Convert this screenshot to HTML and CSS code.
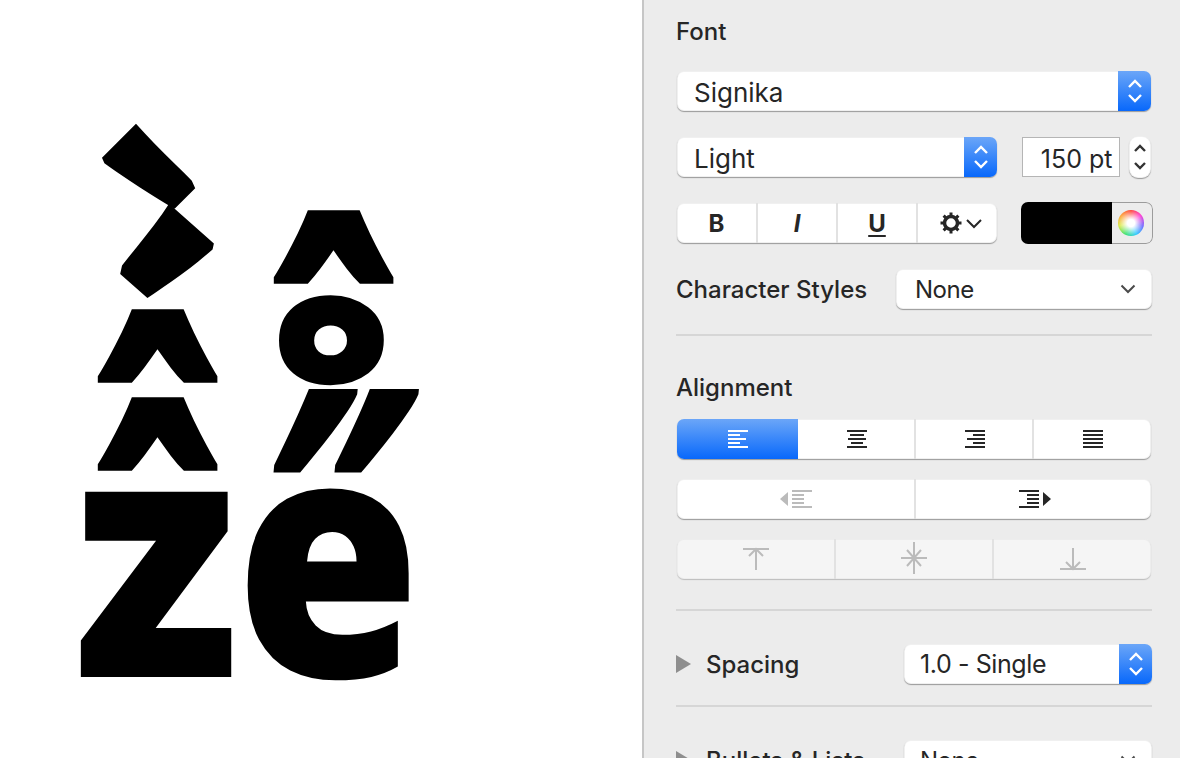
FILE: index.html
```html
<!DOCTYPE html>
<html lang="en">

<head>
  <meta charset="UTF-8">
  <meta name="viewport" content="width=device-width, initial-scale=1.0">
  <title>Format Inspector</title>
  <link rel="stylesheet" href="styles.css">
</head>

<body>
  <!-- Document canvas with the stacked accents -->
  <main class="canvas">
    <span class="glyph gl-grave">`</span>
    <span class="glyph gl-acute">´</span>
    <span class="glyph gl-circ-a">ˆ</span>
    <span class="glyph gl-circ-b">ˆ</span>
    <span class="glyph gl-z">z</span>
    <span class="glyph gl-circ-c">ˆ</span>
    <span class="glyph gl-ring">˚</span>
    <span class="glyph gl-dbl">˝</span>
    <span class="glyph gl-e">e</span>
  </main>

  <aside class="panel">
    <h2 class="section-title">Font</h2>
    <div class="row">
      <div class="popup popup-wide"><span class="popup-text">Signika</span>
        <span class="popup-arrows"><svg width="16" height="28" viewBox="0 0 16 28"><path d="M2 10l6-6 6 6M2 18l6 6 6-6" /></svg></span>
      </div>
    </div>
    <div class="row row-split">
      <div class="popup popup-style"><span class="popup-text">Light</span>
        <span class="popup-arrows"><svg width="16" height="28" viewBox="0 0 16 28"><path d="M2 10l6-6 6 6M2 18l6 6 6-6" /></svg></span>
      </div>
      <div class="size-field">150 pt</div>
      <div class="stepper"><svg width="12" height="30" viewBox="0 0 12 30"><path d="M1 9l5-5 5 5M1 21l5 5 5-5" /></svg></div>
    </div>
    <div class="row row-split">
      <div class="seg seg-style">
        <button class="seg-btn style-b">B</button>
        <button class="seg-btn style-i">I</button>
        <button class="seg-btn style-u">U</button>
        <button class="seg-btn style-more">
          <svg width="42" height="24" viewBox="0 0 42 24">
            <circle class="gear-ring" cx="11" cy="12" r="6.5" />
            <path class="gear-teeth" d="M11 1.500v4M11 18.500v4M.5 12h4M17.500 12h4M3.600 4.600l2.800 2.800M15.600 16.600l2.800 2.800M18.400 4.600l-2.800 2.800M6.400 16.600l-2.800 2.800" />
            <path class="gear-chev" d="M27 9l7 7 7-7" />
          </svg>
        </button>
      </div>
      <div class="color-well">
        <div class="color-black"></div>
        <div class="color-pick"><div class="color-wheel"></div></div>
      </div>
    </div>
    <div class="row row-label">
      <span class="section-title">Character Styles</span>
      <div class="popup popup-char"><span class="popup-text">None</span>
        <svg class="chev" width="16" height="10" viewBox="0 0 16 10"><path d="M1.500 1.500L8 8l6.500-6.500" /></svg>
      </div>
    </div>
    <hr class="divider divider-a">

    <h2 class="section-title title-align">Alignment</h2>
    <div class="seg seg-align">
      <button class="seg-btn seg-on">
        <svg class="bars" width="20" height="18" viewBox="0 0 20 18"><path d="M0 0h20v2H0zM0 4h12v2H0zM0 8h18v2H0zM0 12h12v2H0zM0 16h20v2H0z" /></svg>
      </button>
      <button class="seg-btn">
        <svg class="bars" width="20" height="18" viewBox="0 0 20 18"><path d="M0 0h20v2H0zM3 4h14v2H3zM1 8h18v2H1zM4 12h12v2H4zM0 16h20v2H0z" /></svg>
      </button>
      <button class="seg-btn">
        <svg class="bars" width="20" height="18" viewBox="0 0 20 18"><path d="M0 0h20v2H0zM8 4h12v2H8zM2 8h18v2H2zM8 12h12v2H8zM0 16h20v2H0z" /></svg>
      </button>
      <button class="seg-btn">
        <svg class="bars" width="20" height="18" viewBox="0 0 20 18"><path d="M0 0h20v2H0zM0 4h20v2H0zM0 8h20v2H0zM0 12h20v2H0zM0 16h20v2H0z" /></svg>
      </button>
    </div>
    <div class="seg seg-indent">
      <button class="seg-btn">
        <svg class="bars bars-off" width="32" height="18" viewBox="0 0 32 18"><path d="M8 2v14L0 9zM12 0h20v2H12zM12 4h12v2H12zM12 8h12v2H12zM12 12h12v2H12zM12 16h20v2H12z" /></svg>
      </button>
      <button class="seg-btn indent-on">
        <svg class="bars" width="32" height="18" viewBox="0 0 32 18"><path d="M24 2v14l8-7zM0 0h20v2H0zM8 4h12v2H8zM8 8h12v2H8zM8 12h12v2H8zM0 16h20v2H0z" /></svg>
      </button>
    </div>
    <div class="seg seg-vert">
      <button class="seg-btn">
        <svg class="lines" width="26" height="24" viewBox="0 0 26 24"><path d="M0 2h26M13 2v21M6 9l7-7 7 7" /></svg>
      </button>
      <button class="seg-btn">
        <svg class="lines" width="26" height="34" viewBox="0 0 26 34"><path d="M0 16h26M13 0v32M6 8l7 8 7-8M6 24l7-8 7 8" /></svg>
      </button>
      <button class="seg-btn">
        <svg class="lines" width="26" height="24" viewBox="0 0 26 24"><path d="M0 22h26M13 1v21M6 15l7 7 7-7" /></svg>
      </button>
    </div>
    <hr class="divider divider-b">

    <div class="row-label row-disc">
      <span class="disc"></span>
      <span class="section-title disc-title">Spacing</span>
      <div class="popup popup-disc"><span class="popup-text">1.0 - Single</span>
        <span class="popup-arrows"><svg width="16" height="28" viewBox="0 0 16 28"><path d="M2 10l6-6 6 6M2 18l6 6 6-6" /></svg></span>
      </div>
    </div>
    <hr class="divider divider-c">
    <div class="row-label row-disc">
      <span class="disc"></span>
      <span class="section-title disc-title">Bullets &amp; Lists</span>
      <div class="popup popup-disc popup-none"><span class="popup-text">None</span>
        <svg class="chev" width="16" height="10" viewBox="0 0 16 10"><path d="M1.500 1.500L8 8l6.500-6.500" /></svg>
      </div>
    </div>
  </aside>
</body>

</html>
```

FILE: styles.css
```css
html,
body {
  height: 100%;
}

body {
  margin: 0;
  height: 758px;
  overflow: hidden;
  display: flex;
  background-color: #ffffff;
  font-family: Inter, "Liberation Sans", sans-serif;
  color: #262626;
}

/* Canvas */
.canvas {
  position: relative;
  width: 642px;
  flex: none;
  overflow: hidden;
  background-color: #ffffff;
}

.glyph {
  position: absolute;
  font-family: "Noto Sans", sans-serif;
  font-weight: 900;
  font-size: 270px;
  line-height: 1;
  color: #000000;
  white-space: pre;
  transform-origin: 0 0;
}

.gl-z {
  left: 73px;
  top: 380px;
  font-size: 335px;
  transform: scaleX(0.98);
}

.gl-e {
  left: 235px;
  top: 380px;
  font-size: 335px;
  transform: scaleX(0.9);
}

.gl-grave {
  left: 66px;
  top: 99px;
  transform: matrix(0.6, -0.6, 0.89, 1.97, 0, 0);
}

.gl-acute {
  left: 149px;
  top: 99px;
  transform: matrix(0.795, 0.705, -0.49, 2.19, 0, 0);
}

.gl-circ-a {
  left: 87px;
  top: 253px;
  transform: scaleY(1.7);
}

.gl-circ-b {
  left: 87px;
  top: 341px;
  transform: scaleY(1.7);
}

.gl-circ-c {
  left: 263px;
  top: 154px;
  transform: scaleY(1.7);
}

.gl-ring {
  left: 263px;
  top: 282px;
  font-size: 400px;
  transform: scaleY(0.91);
}

.gl-dbl {
  left: 277px;
  top: 326px;
  font-size: 310px;
  transform: matrix(0.87, 0, -0.164, 1.68, 0, 0);
}

/* Inspector panel */
.panel {
  flex: 1;
  box-sizing: border-box;
  border-left: 2px solid #c6c6c6;
  background-color: #ececec;
  padding: 17px 29px 0 33px;
}

.section-title {
  margin: 0 0 0 -1px;
  font-size: 24px;
  font-weight: 500;
  line-height: 30px;
  color: #262626;
}

.row {
  display: flex;
  margin-top: 26px;
}

.row:first-of-type {
  margin-top: 24px;
}

.row-split {
  justify-content: space-between;
  align-items: center;
  height: 40px;
}

.row-label {
  display: flex;
  align-items: center;
  justify-content: space-between;
  margin-top: 26px;
}

.row-label .section-title {
  position: relative;
  top: 1px;
}

/* Popups */
.popup {
  position: relative;
  box-sizing: border-box;
  height: 40px;
  display: flex;
  align-items: center;
  background-color: #ffffff;
  border-radius: 7px;
  box-shadow: inset 0 0 0 1px rgba(0, 0, 0, 0.06), 0 1px 1px rgba(0, 0, 0, 0.35);
  font-size: 26px;
  color: #262626;
}

.popup-text {
  padding: 2px 0 0 17px;
}

.popup-wide {
  width: 474px;
}

.popup-style {
  width: 320px;
}

.popup-char {
  width: 256px;
  padding-left: 2px;
  justify-content: space-between;
  font-size: 24px;
  letter-spacing: -0.5px;
}

.popup-char .popup-text,
.popup-disc .popup-text {
  padding-top: 0;
}

.popup-disc {
  width: 248px;
  margin-left: auto;
  justify-content: space-between;
  font-size: 25px;
  letter-spacing: -0.4px;
}

.popup-disc .popup-text {
  padding-left: 16px;
}

.popup-none {
  font-size: 24px;
  letter-spacing: -0.5px;
}

.popup-arrows {
  margin-left: auto;
  width: 33px;
  height: 40px;
  display: flex;
  align-items: center;
  justify-content: center;
  border-radius: 0 7px 7px 0;
  background: linear-gradient(#6ba6f8, #0868fb);
}

.popup-arrows path {
  fill: none;
  stroke: #ffffff;
  stroke-width: 2.4;
}

.chev {
  margin-right: 16px;
}

.chev path {
  fill: none;
  stroke: #4a4a4a;
  stroke-width: 2;
}

/* Size field */
.size-field {
  box-sizing: border-box;
  width: 98px;
  height: 40px;
  margin-left: 24px;
  border: 1px solid #b5b5b5;
  background-color: #ffffff;
  padding-right: 6px;
  text-align: right;
  font-size: 25px;
  line-height: 42px;
}

.stepper {
  width: 22px;
  height: 42px;
  margin-left: 9px;
  margin-right: 1px;
  display: flex;
  align-items: center;
  justify-content: center;
  background-color: #ffffff;
  border-radius: 9px;
  box-shadow: inset 0 0 0 1px rgba(0, 0, 0, 0.06), 0 1px 1px rgba(0, 0, 0, 0.35);
}

.stepper path {
  fill: none;
  stroke: #333333;
  stroke-width: 2.4;
}

/* Segmented controls */
.seg {
  display: grid;
  height: 40px;
  border-radius: 7px;
  overflow: hidden;
  background-color: #ffffff;
  box-shadow: inset 0 0 0 1px rgba(0, 0, 0, 0.06), 0 1px 1px rgba(0, 0, 0, 0.35);
}

.seg-btn {
  margin: 0;
  padding: 0;
  border: 0;
  border-left: 2px solid #e2e2e2;
  background: transparent;
  display: flex;
  align-items: center;
  justify-content: center;
  font-family: Inter, "Liberation Sans", sans-serif;
  color: #262626;
}

.seg-btn:first-child {
  border-left: 0;
}

.seg-style {
  width: 320px;
  grid-template-columns: 79px 80px 80px 81px;
}

.style-b,
.style-i,
.style-u {
  font-size: 24px;
  font-weight: 700;
}

.style-i {
  font-style: italic;
}

.style-u {
  text-decoration: underline;
  text-underline-offset: 3px;
}

.style-more {
  padding-left: 6px;
}

.gear-ring {
  fill: none;
  stroke: #262626;
  stroke-width: 3.5;
}

.gear-teeth {
  fill: none;
  stroke: #262626;
  stroke-width: 3;
}

.gear-chev {
  fill: none;
  stroke: #262626;
  stroke-width: 2;
}

.seg-align,
.seg-indent,
.seg-vert {
  width: 474px;
}

.title-align {
  position: relative;
  top: 1px;
}

.seg-align {
  margin-top: 17px;
  grid-template-columns: 121px 116px 118px 119px;
}

.seg-align .seg-btn:nth-child(2),
.seg-align .seg-btn:nth-child(3) {
  padding-left: 2px;
}

.seg-on {
  background: linear-gradient(#6ba6f8, #0868fb);
}

.seg-on + .seg-btn {
  border-left: 0;
}

.seg-indent,
.seg-vert {
  margin-top: 20px;
}

.seg-indent {
  grid-template-columns: 237px 237px;
}

.indent-on {
  padding-left: 3px;
}

.seg-vert {
  grid-template-columns: 157px 158px 159px;
  background-color: #f5f5f5;
  box-shadow: inset 0 0 0 1px rgba(0, 0, 0, 0.03), 0 1px 1px rgba(0, 0, 0, 0.2);
}

.bars path {
  fill: #262626;
}

.seg-on .bars path {
  fill: #ffffff;
}

.bars-off path {
  fill: #bbbbbb;
}

.lines path {
  fill: none;
  stroke: #bbbbbb;
  stroke-width: 2;
}

/* Colour well */
.color-well {
  display: flex;
  width: 132px;
  height: 42px;
  border-radius: 7px;
  overflow: hidden;
  margin-left: auto;
  margin-right: -1px;
}

.color-black {
  width: 91px;
  background-color: #000000;
}

.color-pick {
  flex: 1;
  display: flex;
  align-items: center;
  justify-content: center;
  box-sizing: border-box;
  border: 1px solid #9c9c9c;
  border-left: 0;
  border-radius: 0 7px 7px 0;
  background-color: #ececec;
}

.color-wheel {
  width: 26px;
  height: 26px;
  margin-right: 2px;
  border-radius: 50%;
  background: radial-gradient(circle, #ffffff 20%, rgba(255, 255, 255, 0) 72%),
    conic-gradient(#ff3b30, #ff2fd0, #6a5cff, #21c7ff, #2fe06a, #d8e83a, #ff9a2a, #ff3b30);
}

/* Dividers */
.divider {
  border: 0;
  height: 2px;
  margin: 25px 0 0 -1px;
  width: 476px;
  background-color: #d6d6d6;
}

.divider-a + .section-title {
  margin-top: 36px;
}

.divider-b {
  margin-top: 30px;
}

.divider-c {
  margin-top: 21px;
}

/* Disclosure rows */
.row-disc {
  display: flex;
  align-items: center;
  margin-top: 33px;
}

.disc {
  width: 0;
  height: 0;
  margin-left: -1px;
  border-left: 15px solid #8e8e8e;
  border-top: 9px solid transparent;
  border-bottom: 9px solid transparent;
}

.disc-title {
  margin-left: 15px;
}
```
